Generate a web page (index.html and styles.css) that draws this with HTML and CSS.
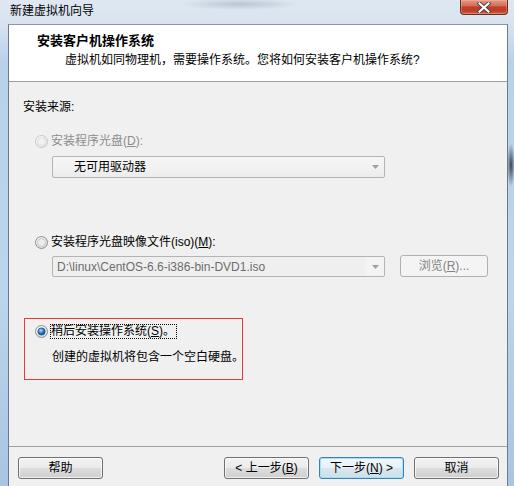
FILE: index.html
```html
<!DOCTYPE html>
<html lang="zh-CN">
<head>
<meta charset="utf-8">
<title>新建虚拟机向导</title>
<link rel="stylesheet" href="styles.css">
</head>
<body>
<div class="win">
  <div class="titlebar">
    <span class="ttl">新建虚拟机向导</span>
    <div class="close">
      <svg width="14" height="11" viewBox="0 0 14 11"><path d="M2.5 1.5 L11.5 9.5 M11.5 1.5 L2.5 9.5" stroke="#4a4a4a" stroke-width="4" stroke-linecap="square" fill="none"/><path d="M2.5 1.5 L11.5 9.5 M11.5 1.5 L2.5 9.5" stroke="#ffffff" stroke-width="2" stroke-linecap="square" fill="none"/></svg>
    </div>
  </div>
  <div class="frame">
    <div class="header">
      <div class="h-title">安装客户机操作系统</div>
      <div class="h-sub">虚拟机如同物理机，需要操作系统。您将如何安装客户机操作系统?</div>
    </div>
    <div class="content">
      <div class="src">安装来源:</div>

      <div class="radio-row r1 disabled">
        <svg class="radio" width="13" height="13" viewBox="0 0 13 13"><defs><radialGradient id="rgd" cx="0.35" cy="0.3" r="0.8"><stop offset="0" stop-color="#ffffff"/><stop offset="1" stop-color="#e6e6e6"/></radialGradient></defs><circle cx="6.5" cy="6.5" r="6" fill="url(#rgd)" stroke="#c5c5c5"/><circle cx="6.5" cy="6.5" r="4" fill="#f1f1f1" stroke="#dcdcdc"/></svg>
        <span class="lbl">安装程序光盘(<u>D</u>):</span>
      </div>
      <div class="combo c1">
        <span class="ctext">无可用驱动器</span>
        <svg class="arrow" width="7" height="4" viewBox="0 0 7 4"><path d="M0 0 H7 L3.5 4 Z" fill="#a0a0a0"/></svg>
      </div>

      <div class="radio-row r2">
        <svg class="radio" width="13" height="13" viewBox="0 0 13 13"><defs><radialGradient id="rgn" cx="0.35" cy="0.3" r="0.8"><stop offset="0" stop-color="#ffffff"/><stop offset="1" stop-color="#d6d6d6"/></radialGradient></defs><circle cx="6.5" cy="6.5" r="6" fill="url(#rgn)" stroke="#8f8f8f"/><circle cx="6.5" cy="6.5" r="4" fill="#ececec" stroke="#c8c8c8"/></svg>
        <span class="lbl">安装程序光盘映像文件(iso)(<u>M</u>):</span>
      </div>
      <div class="iso-row">
        <div class="combo c2">
          <span class="ctext path">D:\linux\CentOS-6.6-i386-bin-DVD1.iso</span>
          <svg class="arrow" width="7" height="4" viewBox="0 0 7 4"><path d="M0 0 H7 L3.5 4 Z" fill="#a0a0a0"/></svg>
        </div>
        <div class="btn browse">浏览(<u>R</u>)...</div>
      </div>

      <div class="later-box">
        <div class="radio-row r3">
          <svg class="radio" width="13" height="13" viewBox="0 0 13 13"><defs><radialGradient id="rgc" cx="0.35" cy="0.3" r="0.8"><stop offset="0" stop-color="#ffffff"/><stop offset="1" stop-color="#d6d6d6"/></radialGradient><radialGradient id="dot" cx="0.4" cy="0.35" r="0.7"><stop offset="0" stop-color="#bfe4ff"/><stop offset="0.5" stop-color="#2f7fd0"/><stop offset="1" stop-color="#0f3f7c"/></radialGradient></defs><circle cx="6.5" cy="6.5" r="6" fill="url(#rgc)" stroke="#8f8f8f"/><circle cx="6.5" cy="6.5" r="3.6" fill="url(#dot)" stroke="#1a4f8a" stroke-width="0.8"/></svg>
          <span class="lbl focus">稍后安装操作系统(<u>S</u>)。</span>
        </div>
        <div class="desc">创建的虚拟机将包含一个空白硬盘。</div>
      </div>
    </div>
    <div class="footer">
      <div class="btn">帮助</div>
      <div class="spacer"></div>
      <div class="btn">&lt; 上一步(<u>B</u>)</div>
      <div class="btn default">下一步(<u>N</u>) &gt;</div>
      <div class="btn">取消</div>
    </div>
  </div>
</div>
</body>
</html>
```
FILE: styles.css
```css
html, body {
  margin: 0;
  padding: 0;
}
body {
  width: 514px;
  height: 486px;
  overflow: hidden;
  font-family: "Liberation Sans", "Noto Sans CJK SC", sans-serif;
  font-size: 12px;
  color: #000;
  background:
    radial-gradient(ellipse 4px 22px at 511px 165px, rgba(40,52,66,0.9), rgba(40,52,66,0) 100%),
    radial-gradient(ellipse 60px 6px at 240px 4px, rgba(120,130,150,0.35), rgba(120,130,150,0) 100%),
    linear-gradient(180deg, #dfe8f2 0px, #d8e3ef 24px, #b9d2ec 60px, #bcd4ec 300px, #a9c5e3 486px);
}
.win {
  height: 486px;
  display: flex;
  flex-direction: column;
}
.titlebar {
  height: 24px;
  display: flex;
  justify-content: space-between;
  align-items: flex-start;
  padding-left: 10px;
  flex-shrink: 0;
}
.ttl {
  line-height: 22px;
  font-size: 12px;
  color: #000;
}
.close {
  width: 46px;
  height: 14px;
  margin-right: 6px;
  border: 1px solid #6a2b20;
  border-top: none;
  border-radius: 0 0 4px 4px;
  background: linear-gradient(180deg, #e49a88 0%, #d46e58 40%, #c23d26 52%, #be3e28 78%, #d0644c 100%);
  box-shadow: inset 0 0 0 1px rgba(255,200,180,0.35);
  display: flex;
  align-items: center;
  justify-content: center;
}
.frame {
  flex: 1;
  margin: 0 6px 0 8px;
  border-left: 1px solid #6c7a8a;
  border-right: 1px solid #6c7a8a;
  border-top: 1px solid #8a96a4;
  display: flex;
  flex-direction: column;
  background: #f0f0f0;
}
.header {
  background: #fff;
  border-bottom: 1px solid #a0a0a0;
  padding: 7px 0 0 28px;
  box-sizing: border-box;
  height: 57px;
  flex-shrink: 0;
}
.h-title {
  font-weight: bold;
  font-size: 13px;
  line-height: 18px;
}
.h-sub {
  line-height: 18px;
  margin-top: 1px;
  padding-left: 28px;
}
.content {
  flex: 1;
  padding: 17px 0 0 14px;
}
.src {
  line-height: 16px;
}
.radio-row {
  display: flex;
  align-items: center;
  height: 16px;
  white-space: nowrap;
}
.radio {
  display: block;
  margin-left: 12px;
  margin-right: 3px;
  flex-shrink: 0;
}
.lbl {
  line-height: 16px;
}
.r1 {
  margin-top: 18px;
}
.disabled .lbl {
  color: #8d8d8d;
}
.combo {
  width: 333px;
  height: 22px;
  box-sizing: border-box;
  border: 1px solid #b4b4b4;
  border-radius: 2px;
  background: linear-gradient(180deg, #f6f6f6 0%, #f2f2f2 50%, #ececec 100%);
  margin-left: 29px;
  display: flex;
  align-items: center;
  justify-content: space-between;
  padding-right: 5px;
  white-space: nowrap;
}
.c1 {
  margin-top: 7px;
}
.c1 .ctext {
  padding-left: 21px;
  line-height: 16px;
}
.r2 {
  margin-top: 56px;
}
.iso-row {
  margin-top: 5px;
  display: flex;
  align-items: flex-start;
}
.c2 {
  margin-top: 1px;
  height: 21px;
  background: linear-gradient(90deg, #efefef 0, #efefef 312px, #f4f4f4 312px);
}
.c2 .ctext {
  padding-left: 4px;
  line-height: 16px;
  color: #6d6d6d;
}
.arrow {
  display: block;
}
.btn {
  width: 85px;
  height: 22px;
  box-sizing: border-box;
  border: 1px solid #707070;
  border-radius: 3px;
  background: linear-gradient(180deg, #f2f2f2 0%, #ebebeb 48%, #dddddd 52%, #cfcfcf 100%);
  box-shadow: inset 0 0 0 1px rgba(255,255,255,0.7);
  display: flex;
  align-items: center;
  justify-content: center;
  line-height: 16px;
  white-space: nowrap;
}
.browse {
  width: 88px;
  margin-left: 15px;
  border-color: #adb2b5;
  background: #f4f4f4;
  box-shadow: none;
  color: #838383;
}
.later-box {
  margin-top: 41px;
  margin-left: 1px;
  width: 219px;
  height: 62px;
  box-sizing: border-box;
  border: 1px solid #e63a3a;
  padding-top: 4px;
}
.r3 .radio {
  margin-left: 10px;
  margin-right: 2px;
}
.focus {
  border: 1px dotted #000;
  line-height: 13px;
  padding: 0 1px 0 0;
}
.desc {
  margin-top: 10px;
  margin-left: 27px;
  line-height: 16px;
  white-space: nowrap;
}
.footer {
  height: 40px;
  box-sizing: border-box;
  border-top: 1px solid #a0a0a0;
  padding: 10px 8px 0 9px;
  display: flex;
  align-items: flex-start;
  gap: 10px;
  flex-shrink: 0;
}
.spacer {
  flex: 1;
}
.btn.default {
  border-color: #3c7fb1;
  box-shadow: inset 0 0 0 1px #9fe3fb;
  background: linear-gradient(180deg, #f3f8fb 0%, #e8f1f7 48%, #dae6ee 52%, #cfdee8 100%);
}
```
